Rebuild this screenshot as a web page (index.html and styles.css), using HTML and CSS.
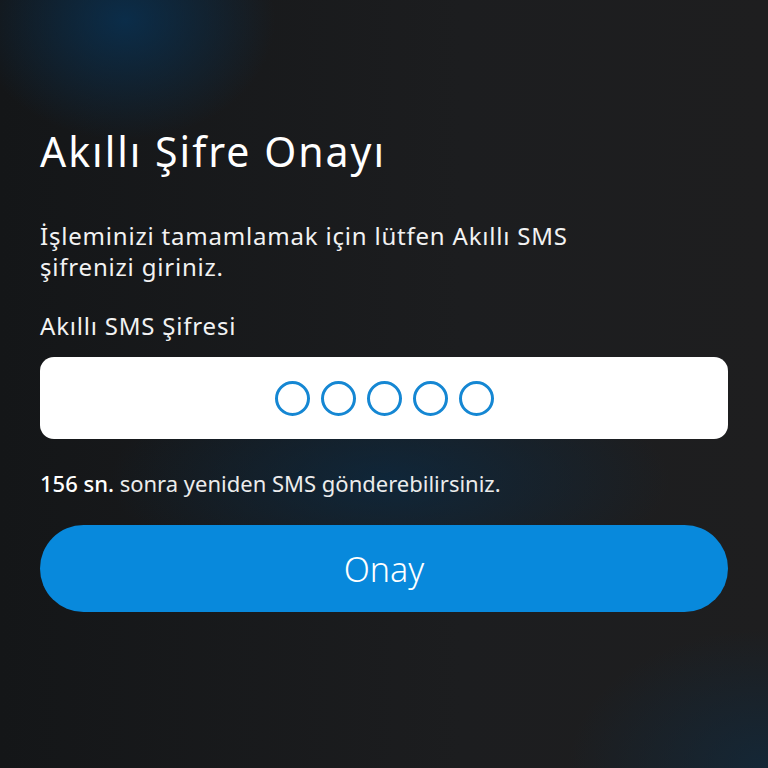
FILE: index.html
```html
<!DOCTYPE html>
<html lang="tr">
<head>
<meta charset="utf-8">
<title>Akıllı Şifre Onayı</title>
<link rel="stylesheet" href="styles.css">
</head>
<body>
<main class="screen">
  <h1 class="title">Akıllı Şifre Onayı</h1>
  <p class="desc">İşleminizi tamamlamak için lütfen Akıllı SMS<br>şifrenizi giriniz.</p>
  <label class="label">Akıllı SMS Şifresi</label>
  <div class="code-box">
    <span class="dot"></span>
    <span class="dot"></span>
    <span class="dot"></span>
    <span class="dot"></span>
    <span class="dot"></span>
  </div>
  <p class="timer"><strong>156 sn.</strong> sonra yeniden SMS gönderebilirsiniz.</p>
  <button class="confirm">Onay</button>
</main>
</body>
</html>
```
FILE: styles.css
```css
html, body {
  margin: 0;
  padding: 0;
}
body {
  width: 768px;
  height: 768px;
  overflow: hidden;
  font-family: "Noto Sans", "Open Sans", sans-serif;
  color: #ffffff;
  background-color: #1b1c1e;
  background-image:
    radial-gradient(ellipse 150px 120px at 125px 20px, rgba(8, 50, 85, 0.8), rgba(8, 50, 85, 0) 100%),
    radial-gradient(ellipse 280px 110px at 390px 480px, rgba(8, 45, 75, 0.6), rgba(8, 45, 75, 0) 100%),
    radial-gradient(ellipse 200px 140px at 768px 768px, rgba(14, 45, 70, 0.6), rgba(14, 45, 70, 0) 100%),
    linear-gradient(90deg, #141618 0%, #1c1d1f 60%, #1e1e1f 100%);
}
.screen {
  padding: 128px 40px 0 40px;
  display: flex;
  flex-direction: column;
}
.title {
  margin: 0;
  font-size: 41px;
  line-height: 46px;
  font-weight: 400;
  letter-spacing: 2px;
}
.desc {
  margin: 46px 0 0 0;
  font-size: 24px;
  line-height: 31px;
  font-weight: 400;
  letter-spacing: 0.8px;
  color: #f2f2f2;
}
.label {
  margin-top: 28px;
  font-size: 24px;
  line-height: 31px;
  letter-spacing: 0.8px;
  color: #f2f2f2;
}
.code-box {
  margin-top: 16px;
  height: 82px;
  background: #ffffff;
  border-radius: 14px;
  display: flex;
  align-items: center;
  justify-content: center;
  gap: 11px;
}
.dot {
  width: 29px;
  height: 29px;
  border: 3px solid #1587d3;
  border-radius: 50%;
}
.timer {
  margin: 31px 0 0 0;
  font-size: 22px;
  line-height: 26px;
  color: #ececec;
}
.timer strong {
  font-weight: 500;
  color: #ffffff;
}
.confirm {
  margin-top: 29px;
  height: 87px;
  border: 0;
  border-radius: 44px;
  background: #0889dc;
  color: #ffffff;
  font-family: "Noto Sans", "Open Sans", sans-serif;
  font-size: 34px;
  font-weight: 300;
  padding: 0;
  cursor: pointer;
}
```
